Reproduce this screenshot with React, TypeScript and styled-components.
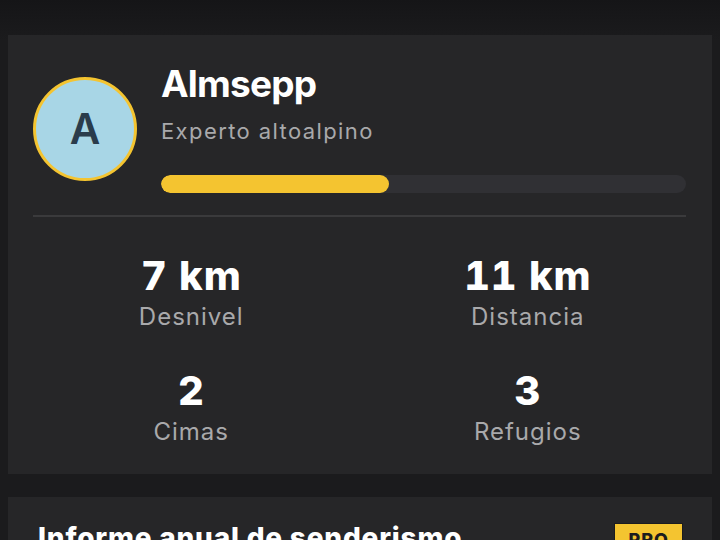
import styled, { createGlobalStyle } from "styled-components";

const GlobalStyle = createGlobalStyle`
  html, body {
    margin: 0;
    padding: 0;
    background: #18181a;
  }
  body {
    font-family: Inter, "Noto Sans", sans-serif;
    color: #ffffff;
  }
`;

const Page = styled.div`
  width: 720px;
  height: 540px;
  overflow: hidden;
  background: linear-gradient(#151517, #1b1b1d 40px);
  padding: 35px 8px 0;
  box-sizing: border-box;
  display: flex;
  flex-direction: column;
  gap: 23px;
`;

const Card = styled.div`
  background: #262628;
  padding: 29px 26px 28px 25px;
`;

const Header = styled.div`
  display: flex;
  align-items: center;
  gap: 24px;
`;

const Avatar = styled.div`
  width: 98px;
  height: 98px;
  border-radius: 50%;
  border: 3px solid #f4c430;
  background: #a8d6e6;
  color: #2a3c4b;
  font-size: 42px;
  font-weight: 600;
  display: flex;
  align-items: center;
  justify-content: center;
  flex-shrink: 0;
`;

const Info = styled.div`
  flex: 1;
  display: flex;
  flex-direction: column;
`;

const Name = styled.div`
  font-size: 37px;
  font-weight: 700;
  line-height: 40px;
  letter-spacing: -0.8px;
`;

const Rank = styled.div`
  margin-top: 15px;
  font-size: 22px;
  line-height: 24px;
  letter-spacing: 1.4px;
  color: #a9a9ab;
`;

const Track = styled.div`
  margin-top: 32px;
  height: 18px;
  border-radius: 9px;
  background: #303034;
  overflow: hidden;
`;

const Fill = styled.div`
  height: 100%;
  border-radius: 9px;
  background: #f4c430;
`;

const Divider = styled.div`
  margin-top: 22px;
  height: 2px;
  background: #3a3a3c;
`;

const Stats = styled.div`
  display: grid;
  grid-template-columns: 1fr 1fr;
  column-gap: 20px;
  row-gap: 38px;
  padding-top: 37px;
`;

const Stat = styled.div`
  display: flex;
  flex-direction: column;
  align-items: center;
`;

const Value = styled.div`
  font-size: 40px;
  font-weight: 800;
  line-height: 44px;
  letter-spacing: 0.8px;
  font-feature-settings: "tnum";
`;

const Label = styled.div`
  margin-top: 5px;
  font-size: 24px;
  line-height: 28px;
  letter-spacing: 1px;
  color: #a9a9ab;
`;

const ReportCard = styled.div`
  background: #262628;
  flex: 1;
`;

const ReportHead = styled.div`
  display: flex;
  justify-content: space-between;
  align-items: flex-start;
  padding: 24px 29px 0 30px;
`;

const ReportTitle = styled.div`
  font-size: 28px;
  font-weight: 800;
  line-height: 34px;
  letter-spacing: 0.8px;
`;

const ProBadge = styled.div`
  margin-top: 2px;
  background: #f4c430;
  color: #1c1c1e;
  border: 1px solid #1c1c1e;
  font-size: 18px;
  line-height: 22px;
  font-weight: 800;
  padding: 5px 13px;
  letter-spacing: 1px;
`;

const stats = [
  { value: "7 km", label: "Desnivel" },
  { value: "11 km", label: "Distancia" },
  { value: "2", label: "Cimas" },
  { value: "3", label: "Refugios" },
];

export default function App() {
  const progress = 43.5;
  return (
    <>
      <GlobalStyle />
      <Page>
        <Card>
          <Header>
            <Avatar>A</Avatar>
            <Info>
              <Name>Almsepp</Name>
              <Rank>Experto altoalpino</Rank>
              <Track>
                <Fill style={{ width: `${progress}%` }} />
              </Track>
            </Info>
          </Header>
          <Divider />
          <Stats>
            {stats.map((s) => (
              <Stat key={s.label}>
                <Value>{s.value}</Value>
                <Label>{s.label}</Label>
              </Stat>
            ))}
          </Stats>
        </Card>
        <ReportCard>
          <ReportHead>
            <ReportTitle>Informe anual de senderismo</ReportTitle>
            <ProBadge>PRO</ProBadge>
          </ReportHead>
        </ReportCard>
      </Page>
    </>
  );
}
